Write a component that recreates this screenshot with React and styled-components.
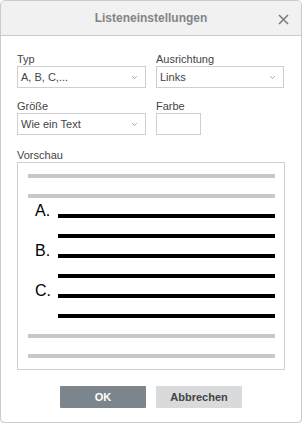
import React from "react";
import styled, { createGlobalStyle } from "styled-components";

const Global = createGlobalStyle`
  html, body { margin: 0; padding: 0; background: #fff; }
  body { font-family: Arial, "Liberation Sans", sans-serif; }
`;

const Dialog = styled.div`
  box-sizing: border-box;
  width: 302px;
  height: 423px;
  border: 1px solid #cbcbcb;
  border-radius: 5px;
  background: #fff;
  display: flex;
  flex-direction: column;
  overflow: hidden;
  box-shadow: 0 1px 2px rgba(0,0,0,0.12);
`;

const Header = styled.div`
  height: 34px;
  border-bottom: 1px solid #cbcbcb;
  background: #f1f1f1;
  display: flex;
  align-items: center;
  justify-content: center;
  position: relative;
`;

const Title = styled.div`
  font-size: 12px;
  font-weight: bold;
  color: #848484;
`;

const Close = styled.button`
  position: absolute;
  right: 12px;
  top: 12px;
  width: 12px;
  height: 12px;
  padding: 0;
  border: none;
  background: transparent;
  display: flex;
  align-items: center;
  justify-content: center;
`;

const Body = styled.div`
  padding: 16px 16px 0 16px;
  display: flex;
  flex-direction: column;
`;

const Grid = styled.div`
  display: grid;
  grid-template-columns: 129px 128px;
  column-gap: 10px;
  row-gap: 11px;
`;

const Field = styled.div`
  display: flex;
  flex-direction: column;
`;

const Label = styled.div`
  font-size: 11px;
  line-height: 14px;
  color: #444;
`;

const Select = styled.div`
  box-sizing: border-box;
  height: 22px;
  width: 100%;
  border: 1px solid #cfcfcf;
  display: flex;
  align-items: center;
  justify-content: space-between;
  padding: 0 8px 0 3px;
  font-size: 11px;
  color: #444;
  background: #fff;
`;

const ColorBox = styled.div`
  box-sizing: border-box;
  width: 45px;
  height: 22px;
  border: 1px solid #cfcfcf;
  background: #fff;
`;

const PreviewLabel = styled(Label)`
  margin-top: 13px;
`;

const Preview = styled.div`
  box-sizing: border-box;
  width: 268px;
  height: 208px;
  border: 1px solid #cfcfcf;
  padding: 11px 9px 0 10px;
  display: flex;
  flex-direction: column;
  gap: 16px;
`;

const Line = styled.div`
  height: 4px;
  background: ${p => (p.$dark ? "#000" : "#c8c8c8")};
  margin-left: ${p => (p.$indent ? "30px" : "0")};
  position: relative;
`;

const Marker = styled.span`
  position: absolute;
  left: -23px;
  bottom: -1px;
  font-size: 16px;
  line-height: 16px;
  color: #000;
`;

const Buttons = styled.div`
  display: flex;
  justify-content: center;
  gap: 10px;
  margin-top: 16px;
`;

const Button = styled.button`
  box-sizing: border-box;
  width: 86px;
  height: 22px;
  border: none;
  border-radius: 1px;
  font-family: Arial, "Liberation Sans", sans-serif;
  font-size: 11px;
  font-weight: bold;
  color: ${p => (p.$primary ? "#fff" : "#444")};
  background: ${p => (p.$primary ? "#7d858c" : "#d8dadc")};
  padding: 0;
`;

const Chevron = () => (
  <svg width="5" height="3" viewBox="0 0 5 3">
    <path d="M0.3 0.3 L2.5 2.5 L4.7 0.3" fill="none" stroke="#999" strokeWidth="0.9" />
  </svg>
);

const XIcon = () => (
  <svg width="11" height="11" viewBox="0 0 11 11">
    <path d="M1 1 L10 10 M10 1 L1 10" stroke="#7a7a7a" strokeWidth="1.5" />
  </svg>
);

export default function App() {
  const lines = [
    { dark: false },
    { dark: false },
    { dark: true, marker: "A." },
    { dark: true },
    { dark: true, marker: "B." },
    { dark: true },
    { dark: true, marker: "C." },
    { dark: true },
    { dark: false },
    { dark: false },
  ];
  return (
    <>
      <Global />
      <Dialog>
        <Header>
          <Title>Listeneinstellungen</Title>
          <Close aria-label="close"><XIcon /></Close>
        </Header>
        <Body>
          <Grid>
            <Field>
              <Label>Typ</Label>
              <Select>A, B, C,...<Chevron /></Select>
            </Field>
            <Field>
              <Label>Ausrichtung</Label>
              <Select>Links<Chevron /></Select>
            </Field>
            <Field>
              <Label>Größe</Label>
              <Select>Wie ein Text<Chevron /></Select>
            </Field>
            <Field>
              <Label>Farbe</Label>
              <ColorBox />
            </Field>
          </Grid>
          <PreviewLabel>Vorschau</PreviewLabel>
          <Preview>
            {lines.map((l, i) => (
              <Line key={i} $dark={l.dark} $indent={l.dark}>
                {l.marker && <Marker>{l.marker}</Marker>}
              </Line>
            ))}
          </Preview>
          <Buttons>
            <Button $primary>OK</Button>
            <Button>Abbrechen</Button>
          </Buttons>
        </Body>
      </Dialog>
    </>
  );
}
